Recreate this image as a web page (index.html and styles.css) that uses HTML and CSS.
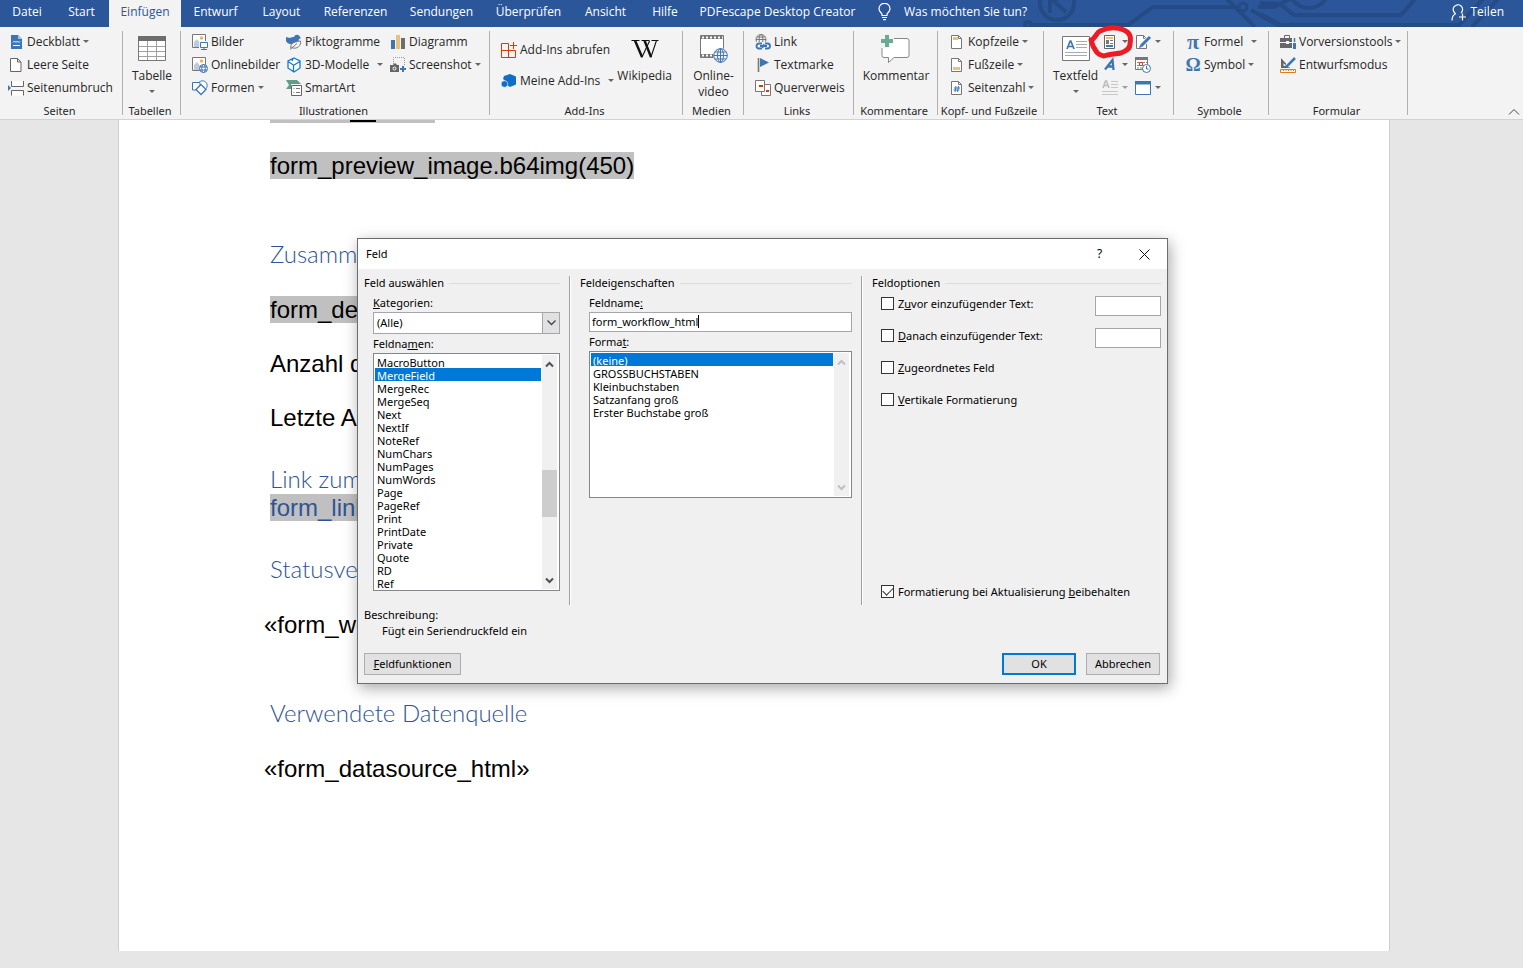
FILE: index.html
```html
<!DOCTYPE html>
<html lang="de">
<head>
<meta charset="utf-8">
<title>Feld einfügen</title>
<link rel="stylesheet" href="styles.css">
</head>
<body>
<header class="tabbar">
  <svg class="circuit" width="503" height="27" viewBox="0 0 503 27" fill="none" stroke="#244b85" stroke-width="4">
    <circle cx="37" cy="3" r="17"/><path d="M30 -8v21M46 12L34 1l12-11"/>
    <circle cx="8" cy="25" r="3"/><path d="M11 25h97l25-18h85M238 7h16l24 -12M205 -3l30 30M231 10l30 17"/><circle cx="223" cy="7" r="4" stroke-width="3"/>
    <path d="M240 3l20 1 14 11h107l15-17M240 14l21 11h178l26-28M452 27l26-28"/><circle cx="289" cy="-12" r="20"/>
  </svg>
  <nav class="tabs">
    <button class="tab">Datei</button>
    <button class="tab">Start</button>
    <button class="tab tab-active">Einfügen</button>
    <button class="tab">Entwurf</button>
    <button class="tab">Layout</button>
    <button class="tab">Referenzen</button>
    <button class="tab">Sendungen</button>
    <button class="tab">Überprüfen</button>
    <button class="tab">Ansicht</button>
    <button class="tab">Hilfe</button>
    <button class="tab">PDFescape Desktop Creator</button>
    <button class="tab tell-me"><svg width="13" height="18" viewBox="0 0 13 18" fill="none" stroke="#fff" stroke-width="1.2"><path d="M4 12.500V11C3 9.500 1 8.500 1 5.800a5.500 5.500 0 0 1 11 0C12 8.500 10 9.500 9 11v1.500zM4 14.500h5M5 16.700h3"/></svg>Was möchten Sie tun?</button>
    <button class="tab share"><svg width="16" height="17" viewBox="0 0 16 17" fill="none" stroke="#fff" stroke-width="1.200"><path d="M4.500 9.500a4.700 4.700 0 1 1 5.500-.500M1 16.500c0-3.500 1.500-6 4-7M11.500 9.500v7M8 13h7"/></svg>Teilen</button>
  </nav>
</header>

<div class="ribbon">
  <section class="group">
    <div class="tools pages">
      <button class="tool"><svg width="16" height="16" viewBox="0 0 16 16"><path d="M3 1h7l4 4v10H3z" fill="#3e76b5"/><path d="M10 1v4h4" fill="#a9c4e2"/><path d="M5 8.500L6.500 7 8 8.500 9.500 7 11 8.500 12 7.500M5 11.500h7" fill="none" stroke="#fff"/></svg>Deckblatt<i class="caret"></i></button>
      <button class="tool"><svg width="16" height="16" viewBox="0 0 16 16"><path d="M2.500 1.500h7l3.500 3.500v9.500H2.500zM9.500 1.500V5H13" fill="#fff" stroke="#666"/></svg>Leere Seite</button>
      <button class="tool"><svg width="16" height="16" viewBox="0 0 16 16"><path d="M3.500 1v5.500h12V1M3.500 15.500v-5h12v5" fill="#fff" stroke="#666"/><path d="M0 5l3 3-3 3z" fill="#3e76b5"/></svg>Seitenumbruch</button>
    </div>
    <h2 class="group-title">Seiten</h2>
  </section>

  <section class="group">
    <div class="tools tools-big">
      <button class="big"><svg width="28" height="26" viewBox="0 0 28 26"><path d="M.500.500h27v24H.500z" fill="#fff" stroke="#777"/><path d="M0 0h28v5H0z" fill="#6d6d6d"/><path d="M1 10.500h26M1 15.500h26M1 20.500h26M9.500 5v19M18.500 5v19" stroke="#a0a0a0"/></svg><span>Tabelle</span><i class="caret"></i></button>
    </div>
    <h2 class="group-title">Tabellen</h2>
  </section>

  <section class="group">
    <div class="tools illustrations">
      <button class="tool"><svg width="16" height="16" viewBox="0 0 16 16"><path d="M.500.500h13v13H.500z" fill="#fff" stroke="#777"/><circle cx="9.500" cy="4" r="1.700" fill="#f0b35a"/><path d="M2 13V8l3-3 3 4v4z" fill="#b7cbe4"/><path d="M7 7h9v9H7z" fill="#f3f3f3"/><path d="M8.500 8.500h7v5h-7z" fill="#fff" stroke="#3e76b5"/><path d="M9 15.500h6M12 13v2" stroke="#3e76b5"/></svg>Bilder</button>
      <button class="tool"><svg width="16" height="16" viewBox="0 0 16 16"><path d="M4 10A5 5 0 0 1 0 3l4 1c1-1 3-1 4-1 1-3 5-3 6 0l1 1-2 1c0 3-4 6-9 5z" fill="#3e76b5"/><path d="M5 14.500c-1-4 1-6.500 9.500-7.500 1 4-3 9-9 6.500M4 15.500l7-6" fill="#f3f3f3" stroke="#777"/></svg>Piktogramme</button>
      <button class="tool"><svg width="16" height="16" viewBox="0 0 16 16"><path d="M1 6h4v9H1z" fill="#3e76b5"/><path d="M6 1h4v14H6z" fill="#eac17c"/><path d="M11 4h4v11h-4z" fill="#6d6d6d"/></svg>Diagramm</button>
      <button class="tool"><svg width="16" height="16" viewBox="0 0 16 16"><path d="M.500.500h13v13H.500z" fill="#fff" stroke="#777"/><circle cx="9.500" cy="4" r="1.700" fill="#f0b35a"/><path d="M2 13V8l3-3 3 4v4z" fill="#b7cbe4"/><circle cx="11.500" cy="11.500" r="4" fill="#fff" stroke="#3e76b5"/><ellipse cx="11.500" cy="11.500" rx="1.800" ry="4" fill="none" stroke="#3e76b5"/><path d="M8 10h7M8 13h7" stroke="#3e76b5"/></svg>Onlinebilder</button>
      <button class="tool"><svg width="16" height="16" viewBox="0 0 16 16"><path d="M8 1l6 3v7l-6 4-6-4V4zM2 4.500L7.500 8v7M8 8l6-3.500M7 2l-1 2" fill="#fff" stroke="#1979ca" stroke-width="1.300"/></svg>3D-Modelle<i class="caret caret-far"></i></button>
      <button class="tool"><svg width="16" height="16" viewBox="0 0 16 16"><path d="M3.500 7V.500h11V9" fill="none" stroke="#999" stroke-dasharray="1 1"/><path d="M0 8h3l1-1.500h2L7 8h2v7H0z" fill="#666"/><circle cx="4.500" cy="11.500" r="1.500" fill="none" stroke="#fff"/><path d="M13 9v6M10 12h6" stroke="#3e76b5" stroke-width="2"/></svg>Screenshot<i class="caret"></i></button>
      <button class="tool"><svg width="16" height="16" viewBox="0 0 16 16"><circle cx="10.500" cy="5.500" r="4.700" fill="#fff" stroke="#3e76b5"/><path d="M.500 2.500h7.500v7.500H.500z" fill="#fff" stroke="#3e76b5"/><path d="M9 4.500l5 5-5 5-5-5z" fill="#fff" stroke="#3e76b5" stroke-width="1.300"/></svg>Formen<i class="caret"></i></button>
      <button class="tool"><svg width="16" height="16" viewBox="0 0 16 16"><path d="M0 0h11l4 4H5v5H0l3-4z" fill="#5f9e87"/><path d="M5.500 5.500h10v10h-10z" fill="#fff" stroke="#666"/><path d="M7.500 8.500h1M10 8.500h4M7.500 12.500h1M10 12.500h4" stroke="#777"/></svg>SmartArt</button>
    </div>
    <h2 class="group-title">Illustrationen</h2>
  </section>

  <section class="group">
    <div class="tools addins">
      <div class="addins-list">
        <button class="tool"><svg width="16" height="16" viewBox="0 0 16 16"><path d="M7.500 1.500h-7v14h14v-7H.500M7.500 1.500v14M12.500 0v7M9 3.500h7" fill="none" stroke="#d83b01"/></svg>Add-Ins abrufen</button>
        <button class="tool"><svg width="16" height="16" viewBox="0 0 16 16"><path d="M9 1l6 2.500v8L9 14l-3-2V9L2 6l1-3z" fill="#0f6fc6"/><circle cx="3.500" cy="11" r="3.300" fill="#0f6fc6" stroke="#f3f3f3" stroke-width=".6"/></svg>Meine Add-Ins<i class="caret caret-far"></i></button>
      </div>
      <button class="big"><svg width="28" height="26" viewBox="0 0 28 26"><g fill="none" stroke="#111"><path d="M.500 4.500h8M10.500 4.500h7.500M20.500 4.500h7M7.500 10"/><path d="M4 4.500l7 16.500M13.500 4.500l6.500 16.500" stroke-width="2.400"/><path d="M10.800 21.500l8-17M19.800 21.500l5.700-17" stroke-width="1.100"/></g></svg><span>Wikipedia</span></button>
    </div>
    <h2 class="group-title">Add-Ins</h2>
  </section>

  <section class="group">
    <div class="tools tools-big">
      <button class="big"><svg width="28" height="28" viewBox="0 0 28 28"><path d="M.500.500h23v22H.500z" fill="#fff" stroke="#777"/><path d="M1 2.500h22M1 20.500h22" stroke="#777" stroke-width="3"/><path d="M2 2.500h21M2 20.500h21" stroke="#fff" stroke-width="2" stroke-dasharray="2 2"/><circle cx="20.500" cy="20.500" r="7.500" fill="#f3f3f3"/><g fill="none" stroke="#3e76b5"><circle cx="20.500" cy="20.500" r="6.800"/><ellipse cx="20.500" cy="20.500" rx="3" ry="6.800"/><path d="M13.500 20.500h14M20.500 13.500v14M15 17h11M15 24h11"/></g></svg><span>Online-<br>video</span></button>
    </div>
    <h2 class="group-title">Medien</h2>
  </section>

  <section class="group">
    <div class="tools links">
      <button class="tool"><svg width="16" height="16" viewBox="0 0 16 16"><g fill="none" stroke="#777"><circle cx="6" cy="5.500" r="5"/><ellipse cx="6" cy="5.500" rx="2" ry="5"/><path d="M1 5.500h10M2 3h8"/></g><path d="M0 8h16v8H0z" fill="#f3f3f3"/><path d="M7 9.500H4a2.500 2.500 0 0 0 0 5h3M10 9.500h2.500a2.500 2.500 0 0 1 0 5H10M5 12h2.500l2-1.500M12 12H9l-2 1.500" fill="none" stroke="#3e76b5" stroke-width="1.800"/></svg>Link</button>
      <button class="tool"><svg width="16" height="16" viewBox="0 0 16 16"><path d="M3.500 1v14" stroke="#777" stroke-width="1.600"/><path d="M5 1l9 4.500L5 10z" fill="#3e76b5"/></svg>Textmarke</button>
      <button class="tool"><svg width="16" height="16" viewBox="0 0 16 16"><path d="M6.500 4.500h9v11h-9z" fill="#fff" stroke="#777"/><path d="M.500.500h9v11h-9z" fill="#fff" stroke="#777"/><path d="M4 6h4M11 11h3" stroke="#d83b01" stroke-width="2"/></svg>Querverweis</button>
    </div>
    <h2 class="group-title">Links</h2>
  </section>

  <section class="group">
    <div class="tools tools-big">
      <button class="big"><svg width="30" height="28" viewBox="0 0 30 28"><path d="M3 3.500h23a2 2 0 0 1 2 2v15a2 2 0 0 1-2 2H13l-5.500 5v-5H3a2 2 0 0 1-2-2v-15a2 2 0 0 1 2-2z" fill="#fff" stroke="#888"/><path d="M0 0h13v8H9v5H0z" fill="#f3f3f3"/><path d="M6 0v12M0 6h12" stroke="#6fa893" stroke-width="4"/></svg><span>Kommentar</span></button>
    </div>
    <h2 class="group-title">Kommentare</h2>
  </section>

  <section class="group">
    <div class="tools headers">
      <button class="tool"><svg width="16" height="16" viewBox="0 0 16 16"><path d="M2.500 1.500h7l3 3v10h-10z" fill="#fff" stroke="#777"/><path d="M9.500 1.500v3h3" fill="none" stroke="#777"/><path d="M4 3h5v3H4z" fill="#eac17c"/></svg>Kopfzeile<i class="caret"></i></button>
      <button class="tool"><svg width="16" height="16" viewBox="0 0 16 16"><path d="M2.500 1.500h7l3 3v10h-10z" fill="#fff" stroke="#777"/><path d="M9.500 1.500v3h3" fill="none" stroke="#777"/><path d="M4 10h7v3H4z" fill="#eac17c"/></svg>Fußzeile<i class="caret"></i></button>
      <button class="tool"><svg width="16" height="16" viewBox="0 0 16 16"><path d="M2.500 1.500h7l3 3v10h-10z" fill="#fff" stroke="#777"/><path d="M9.500 1.500v3h3" fill="none" stroke="#777"/><path d="M7 6l-1 6M9.500 6l-1 6M5 8h6M4.500 10h6" stroke="#3e76b5"/></svg>Seitenzahl<i class="caret"></i></button>
    </div>
    <h2 class="group-title">Kopf- und Fußzeile</h2>
  </section>

  <section class="group">
    <div class="tools textgroup">
      <button class="big"><svg width="28" height="26" viewBox="0 0 28 26"><path d="M.500.500h27v24H.500z" fill="#fff" stroke="#777"/><path d="M5 13L8.200 5h.6L12 13M6 10.500h5" fill="none" stroke="#3e76b5" stroke-width="1.700"/><path d="M14 5.500h11M14 8.500h11M14 11.500h11M3 16.500h22M3 19.500h22" stroke="#aaa"/></svg><span>Textfeld</span><i class="caret"></i></button>
      <div class="text-tools">
        <button class="tool"><svg width="16" height="16" viewBox="0 0 16 16"><path d="M2.500 1.500h10v13h-10z" fill="#fff" stroke="#666"/><path d="M4 3h7v2H4z" fill="#eac17c"/><path d="M4 6h3v4H4z" fill="#777"/><path d="M8 6.500h3M8 9.500h3" stroke="#777"/><path d="M4 11h7v2H4z" fill="#3e76b5"/></svg><i class="caret"></i>
          <svg class="marker" width="50" height="38" viewBox="0 0 50 38" fill="none" stroke="#ed1c24" stroke-width="5" stroke-linejoin="round" stroke-linecap="round"><path d="M5 16c4-1 5-7 9-9 8-4 17-4 24-1 7 3 7 8 6 14 0 5-4 7-9 9-5 1-11 1-17 3-7-1-8-5-11-10z"/></svg>
        </button>
        <button class="tool"><svg width="16" height="16" viewBox="0 0 16 16"><path d="M1.500 1.500h7l3 3v10h-10z" fill="#fff" stroke="#777"/><path d="M8.500 1.500v3h3" fill="none" stroke="#777"/><path d="M15 3l-8 8" stroke="#f3f3f3" stroke-width="5"/><path d="M15 3l-9 9" stroke="#3e76b5" stroke-width="3"/><path d="M4 14l1-3 2 2z" fill="#3e76b5"/></svg><i class="caret"></i></button>
        <button class="tool"><svg width="16" height="16" viewBox="0 0 16 16"><path d="M3 12.500L10.500 3l1 10M6 9.500h5" fill="none" stroke="#3e76b5" stroke-width="2.300"/></svg><i class="caret"></i></button>
        <button class="tool"><svg width="16" height="16" viewBox="0 0 16 16"><path d="M.500.500h12v12H.500z" fill="#fff" stroke="#777"/><path d="M0 0h13v3H0z" fill="#777"/><path d="M2 5.500h10M2 8.500h10M2 11h10" stroke="#888" stroke-dasharray="2 1"/><path d="M4.500 5.500h3v3h-3z" fill="#fff" stroke="#d83b01"/><circle cx="11.500" cy="11.500" r="4" fill="#fff" stroke="#3e76b5"/><path d="M11.500 9v3h2" fill="none" stroke="#3e76b5"/></svg></button>
        <button class="tool faded" disabled><svg width="16" height="16" viewBox="0 0 16 16"><path d="M1 8l2.500-7h1L7 8M2 5.500h4" fill="none" stroke="#999" stroke-width="1.500"/><path d="M9 1.500h7M9 4.500h7M9 7.500h7M0 11.500h16M0 14.500h16" stroke="#aaa"/></svg><i class="caret"></i></button>
        <button class="tool"><svg width="16" height="16" viewBox="0 0 16 16"><path d="M.500 1.500h15v13H.500z" fill="#fff" stroke="#3e76b5"/><path d="M0 1h16v3.500H0z" fill="#3e76b5"/></svg><i class="caret"></i></button>
      </div>
    </div>
    <h2 class="group-title">Text</h2>
  </section>

  <section class="group">
    <div class="tools symbols">
      <button class="tool"><b class="glyph glyph-pi">π</b>Formel<i class="caret caret-far"></i></button>
      <button class="tool"><b class="glyph">Ω</b>Symbol<i class="caret"></i></button>
    </div>
    <h2 class="group-title">Symbole</h2>
  </section>

  <section class="group">
    <div class="tools forms">
      <button class="tool"><svg width="16" height="16" viewBox="0 0 16 16"><path d="M4.500 4V1.500h5V4" fill="none" stroke="#666"/><path d="M0 4h14v10H0z" fill="#666"/><path d="M0 8.500h14" stroke="#f3f3f3"/><path d="M6 7h3v3H6z" fill="#f3f3f3"/><path d="M12 4h4v12h-4z" fill="#f3f3f3"/><path d="M14.500 4v4" stroke="#3e76b5" stroke-width="1.500"/><path d="M14.500 9v6" stroke="#3e76b5" stroke-width="3"/></svg>Vorversionstools<i class="caret"></i></button>
      <button class="tool"><svg width="16" height="16" viewBox="0 0 16 16"><path d="M1 1v10h9zM3.500 6l2.500 3H3.500z" fill="#666" fill-rule="evenodd"/><path d="M15 1L7 9" stroke="#f3f3f3" stroke-width="4.500"/><path d="M15 1L7 9l-1 1.500" stroke="#3e76b5" stroke-width="2.500" fill="none"/><path d="M.500 12.500h15v3H.500z" fill="#fff" stroke="#e07b1a"/><path d="M3 13.500h11" stroke="#e07b1a" stroke-dasharray="1 1.500"/></svg>Entwurfsmodus</button>
    </div>
    <h2 class="group-title">Formular</h2>
  </section>
  <button class="collapse" aria-label="Menüband reduzieren"><svg width="12" height="8" viewBox="0 0 12 8" fill="none" stroke="#444"><path d="M1 6.500l5-5 5 5"/></svg></button>
</div>

<main class="workspace">
  <article class="page">
    <div class="cut-line"><div class="cut-mark"></div></div>
    <p class="para after-cut"><mark>form_preview_image.b64img(450)</mark></p>
    <h1 class="heading heading-far">Zusamm</h1>
    <p class="para para-first"><mark>form_des</mark></p>
    <p class="para">Anzahl d</p>
    <p class="para">Letzte A</p>
    <h1 class="heading">Link zum</h1>
    <p class="para para-link"><mark>form_link</mark></p>
    <h1 class="heading">Statusve</h1>
    <p class="para para-first outdent">«form_wo</p>
    <h1 class="heading heading-far">Verwendete Datenquelle</h1>
    <p class="para para-first outdent">«form_datasource_html»</p>
  </article>
</main>

<div class="dialog" role="dialog" aria-labelledby="dialog-title">
  <div class="titlebar">
    <span id="dialog-title" class="dialog-title">Feld</span>
    <button class="title-button">?</button>
    <button class="title-button" aria-label="Schließen"><svg width="11" height="11" viewBox="0 0 11 11" stroke="#111"><path d="M.500.500l10 10M10.500.500l-10 10"/></svg></button>
  </div>
  <div class="columns">
    <section class="column">
      <h3 class="section-title">Feld auswählen</h3>
      <div class="fields">
        <label class="label" for="category"><u>K</u>ategorien:</label>
        <div class="combo">
          <select id="category" class="combo-select"><option>(Alle)</option></select>
          <span class="combo-arrow"><svg width="9" height="6" viewBox="0 0 9 6" fill="none" stroke="#444" stroke-width="1.300"><path d="M.500.500l4 4 4-4"/></svg></span>
        </div>
        <label class="label label-next" for="names">Feldna<u>m</u>en:</label>
        <div class="listbox">
          <select id="names" class="list" size="18">
            <option>MacroButton</option><option selected>MergeField</option><option>MergeRec</option><option>MergeSeq</option><option>Next</option><option>NextIf</option><option>NoteRef</option><option>NumChars</option><option>NumPages</option><option>NumWords</option><option>Page</option><option>PageRef</option><option>Print</option><option>PrintDate</option><option>Private</option><option>Quote</option><option>RD</option><option>Ref</option>
          </select>
          <div class="scroll">
            <svg width="9" height="7" viewBox="0 0 9 7" fill="none" stroke="#505050" stroke-width="2"><path d="M1 5.500L4.500 2 8 5.500"/></svg>
            <div class="thumb"></div>
            <svg width="9" height="7" viewBox="0 0 9 7" fill="none" stroke="#505050" stroke-width="2"><path d="M1 1.500L4.500 5 8 1.500"/></svg>
          </div>
        </div>
      </div>
    </section>
    <section class="column">
      <h3 class="section-title">Feldeigenschaften</h3>
      <div class="fields">
        <label class="label" for="fieldname">Feldname<u>:</u></label>
        <div class="text-wrap"><input id="fieldname" class="text" type="text" value="form_workflow_html"><span class="cursor"></span></div>
        <label class="label label-next" for="format">Forma<u>t</u>:</label>
        <div class="listbox listbox-format">
          <select id="format" class="list" size="11">
            <option selected>(keine)</option><option>GROSSBUCHSTABEN</option><option>Kleinbuchstaben</option><option>Satzanfang groß</option><option>Erster Buchstabe groß</option>
          </select>
          <div class="scroll">
            <svg width="9" height="7" viewBox="0 0 9 7" fill="none" stroke="#bfbfbf" stroke-width="2"><path d="M1 5.500L4.500 2 8 5.500"/></svg>
            <svg width="9" height="7" viewBox="0 0 9 7" fill="none" stroke="#bfbfbf" stroke-width="2"><path d="M1 1.500L4.500 5 8 1.500"/></svg>
          </div>
        </div>
      </div>
    </section>
    <section class="column column-options">
      <h3 class="section-title">Feldoptionen</h3>
      <div class="options">
        <div class="option"><label class="check-label"><input class="check" type="checkbox"><span>Z<u>u</u>vor einzufügender Text:</span></label><input class="text text-small" type="text" aria-label="Zuvor einzufügender Text"></div>
        <div class="option"><label class="check-label"><input class="check" type="checkbox"><span><u>D</u>anach einzufügender Text:</span></label><input class="text text-small" type="text" aria-label="Danach einzufügender Text"></div>
        <div class="option"><label class="check-label"><input class="check" type="checkbox"><span><u>Z</u>ugeordnetes Feld</span></label></div>
        <div class="option"><label class="check-label"><input class="check" type="checkbox"><span><u>V</u>ertikale Formatierung</span></label></div>
        <div class="option option-last"><label class="check-label"><input class="check" type="checkbox" checked><span>Formatierung bei Aktualisierung <u>b</u>eibehalten</span></label></div>
      </div>
    </section>
  </div>
  <div class="description">
    <p class="line">Beschreibung:</p>
    <p class="line line-indent">Fügt ein Seriendruckfeld ein</p>
  </div>
  <div class="actions">
    <button class="action action-wide"><u>F</u>eldfunktionen</button>
    <span class="grow"></span>
    <button class="action action-default">OK</button>
    <button class="action">Abbrechen</button>
  </div>
</div>
</body>
</html>
```
FILE: styles.css
```css
* { box-sizing: border-box; }
body {
  margin: 0;
  min-height: 100vh;
  display: flex;
  flex-direction: column;
  position: relative;
  background: #e6e6e6;
  font: 12px/16px "Open Sans", "Noto Sans", sans-serif;
  color: #262626;
}
button, input, select { font: inherit; color: inherit; margin: 0; }
button { border: 0; background: none; padding: 0; }
h1, h2, h3, p { margin: 0; font-weight: normal; }
svg { display: block; flex: none; }

/* Tab bar */
.tabbar { position: relative; background: #2b579a; overflow: hidden; }
.circuit { position: absolute; right: 0; top: 0; }
.tabs {
  position: relative;
  display: grid;
  grid-template-columns: 54px 55px 72px 69px 63px 85px 87px 87px 67px 52px 173px auto 1fr;
  height: 27px;
}
.tab { color: #fff; padding: 0 0 3px; white-space: nowrap; }
.tab-active { background: #f3f3f3; color: #2b579a; }
.tell-me, .share { display: flex; align-items: center; }
.tell-me { gap: 13px; padding-left: 14px; }
.share { justify-self: end; gap: 3px; padding-right: 19px; }

/* Ribbon */
.ribbon {
  position: relative;
  display: grid;
  grid-template-columns: 123px 58px 309px 193px 61px 110px 84px 106px 130px 95px 139px 1fr;
  height: 93px;
  background: #f3f3f3;
  border-bottom: 1px solid #d2d2d2;
}
.group { position: relative; padding-top: 3px; }
.group::after {
  content: "";
  position: absolute;
  right: 0;
  top: 4px;
  bottom: 4px;
  width: 1px;
  background: #b1b1b1;
}
.group-title { font: 11px/16px "Noto Sans", sans-serif; text-align: center; margin: 4px 4px 0 0; white-space: nowrap; }
.tools { height: 69px; display: grid; grid-auto-rows: 23px; justify-content: start; }
.tool { display: flex; align-items: center; gap: 3px; white-space: nowrap; }
.caret { width: 0; height: 0; border: 3px solid transparent; border-top-color: #666; border-bottom: 0; }
.caret-far { margin-left: 5px; }
.pages { padding-left: 8px; }
.illustrations { padding-left: 11px; grid-template-columns: 94px 104px auto; }
.links, .headers { padding-left: 11px; }
.symbols, .forms { padding-left: 11px; }
.tools-big { display: flex; justify-content: center; }
.big { display: flex; flex-direction: column; align-items: center; height: 69px; padding-top: 5px; }
.big svg { height: 28px; }
.big span { margin-top: 5px; white-space: nowrap; }
.big .caret { margin-top: 6px; }
.addins { display: flex; padding-left: 11px; gap: 3px; }
.addins-list { display: grid; grid-auto-rows: 31px; padding-top: 4px; }
.textgroup { display: flex; padding-left: 9px; gap: 4px; }
.text-tools { display: grid; grid-template-columns: 33px 28px; grid-auto-rows: 23px; }
.text-tools .tool { position: relative; gap: 4px; }
.marker { position: absolute; left: -16px; top: -6px; }
.faded { opacity: 0.6; }
.glyph { width: 16px; font: bold 19px/20px "Liberation Serif", serif; color: #3e76b5; text-align: center; }
.glyph-pi { font-size: 22px; }
.collapse { position: absolute; right: 3px; bottom: 3px; }

/* Document */
.workspace { flex: 1; display: flex; padding: 0 133px 17px 118px; }
.page { flex: 1; background: #fff; border: solid #cfcfcf; border-width: 0 1px; padding-left: 151px; }
.cut-line { height: 3px; width: 165px; background: #c0c0c0; padding-left: 80px; }
.cut-mark { height: 2px; width: 26px; background: #000; }
.para { font: 24px/27px "Liberation Sans", Arial, sans-serif; color: #000; margin-top: 27px; }
.para mark { background: #c0c0c0; color: inherit; }
.after-cut, .para-first { margin-top: 29px; }
.para-link { margin-top: 2px; color: #2f5496; }
.heading { font: 300 24px/27px Lato, sans-serif; color: #2f5496; margin-top: 34px; }
.heading-far { margin-top: 61px; }
.outdent { margin-left: -6px; }

/* Dialog */
.dialog {
  position: absolute;
  left: 357px;
  top: 238px;
  width: 811px;
  background: #f0f0f0;
  border: 1px solid #6d6d6d;
  box-shadow: 2px 4px 14px rgba(0, 0, 0, 0.35);
  font-family: "Noto Sans", sans-serif;
  font-size: 11px;
  color: #000;
  padding-bottom: 8px;
}
.titlebar { display: flex; align-items: center; height: 30px; background: #fff; padding-left: 8px; }
.dialog-title { flex: 1; }
.title-button { width: 45px; display: flex; justify-content: center; font-size: 12px; }
.columns { display: grid; grid-template-columns: 212px 292px 1fr; margin-top: 7px; height: 329px; }
.column { padding: 0 9px 0 6px; border-right: 1px solid #a0a0a0; box-shadow: 1px 0 #fff; }
.column + .column { padding-left: 10px; }
.column-options { border: 0; box-shadow: none; padding-right: 6px; }
.section-title { display: flex; align-items: center; gap: 5px; font-size: 11px; line-height: 14px; }
.section-title::after { content: ""; flex: 1; height: 1px; background: #dcdcdc; }
.fields { padding-left: 9px; display: flex; flex-direction: column; }
.label { line-height: 14px; margin: 6px 0 2px; }
.label-next { margin-top: 3px; }
.combo { position: relative; height: 22px; }
.combo-select { width: 100%; height: 22px; appearance: none; background: #fff; border: 1px solid #a5a5ac; border-radius: 0; padding: 0 3px; }
.combo-arrow {
  position: absolute;
  right: 0;
  top: 0;
  width: 18px;
  height: 22px;
  display: grid;
  place-items: center;
  background: #e1e1e1;
  border: 1px solid #a5a5ac;
  pointer-events: none;
}
.listbox { display: flex; border: 1px solid #828790; background: #fff; padding: 1px; height: 238px; }
.listbox-format { height: 147px; }
.list { flex: 1; min-width: 0; appearance: none; border: 0; border-radius: 0; background: #fff; padding: 0; overflow: hidden; outline: 0; }
.list option { height: 13px; min-height: 0; line-height: 11px; padding: 0 2px; }
.list option:checked { background: #0078d7; color: #fff; }
.scroll { width: 17px; background: #f0f0f0; border: solid #fff; border-width: 0 1px; display: flex; flex-direction: column; align-items: center; justify-content: space-between; padding: 6px 0 5px; }
.thumb { width: 15px; height: 47px; background: #cdcdcd; margin-top: 42px; }
.text-wrap { position: relative; height: 20px; }
.text { width: 100%; height: 20px; border: 1px solid #a5a5ac; border-radius: 0; background: #fff; padding: 0 2px 1px; }
.cursor { position: absolute; left: 109px; top: 3px; width: 1px; height: 13px; background: #000; }
.text-small { width: 66px; }
.options { padding-left: 9px; display: flex; flex-direction: column; height: 315px; padding-top: 6px; }
.option { display: flex; justify-content: space-between; align-items: flex-start; height: 32px; }
.option-last { margin-top: auto; height: 21px; }
.check-label { display: flex; align-items: center; gap: 4px; line-height: 15px; }
.check { appearance: none; width: 13px; height: 13px; border: 1px solid #333; background: #fff; display: grid; place-items: center; }
.check:checked::after {
  content: "";
  width: 9px;
  height: 5px;
  margin-bottom: 3px;
  border: solid #333;
  border-width: 0 0 1px 1px;
  transform: rotate(-45deg);
}
.description { margin-top: 2px; padding-left: 6px; }
.line { line-height: 16px; }
.line-indent { padding-left: 18px; }
.actions { display: flex; gap: 10px; padding: 0 7px 0 6px; margin-top: 14px; }
.grow { flex: 1; }
.action { height: 22px; width: 74px; border: 1px solid #adadad; background: #e1e1e1; }
.action-wide { width: 97px; }
.action-default { border: 2px solid #0078d7; }
```
